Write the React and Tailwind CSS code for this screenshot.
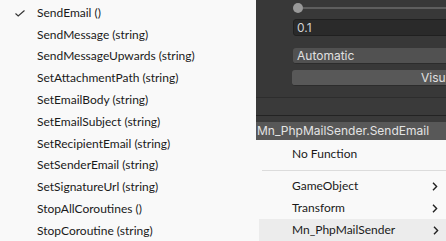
const methods = [
  "SendEmail ()",
  "SendMessage (string)",
  "SendMessageUpwards (string)",
  "SetAttachmentPath (string)",
  "SetEmailBody (string)",
  "SetEmailSubject (string)",
  "SetRecipientEmail (string)",
  "SetSenderEmail (string)",
  "SetSignatureUrl (string)",
  "StopAllCoroutines ()",
  "StopCoroutine (string)",
];

const winFont = { fontFamily: 'Lato, "Noto Sans", sans-serif' };
const unityFont = { fontFamily: 'Inter, "Noto Sans", sans-serif' };

function Check() {
  return (
    <svg width="10" height="7" viewBox="0 0 10 7" className="text-[#333]">
      <path d="M0.5 3.5 L3.2 6 L9.5 0.5" fill="none" stroke="currentColor" strokeWidth="1.1" />
    </svg>
  );
}

function Chevron() {
  return (
    <svg width="6" height="9" viewBox="0 0 6 9" className="text-[#222]">
      <path d="M1 0.8 L4.6 4.5 L1 8.2" fill="none" stroke="currentColor" strokeWidth="1.4" />
    </svg>
  );
}

function MenuRow({ label, sub }) {
  return (
    <div className="h-[22px] flex items-center pl-[36px] pr-[8px] text-[12px] text-[#1a1a1a]">
      <span className="flex-1">{label}</span>
      {sub && <Chevron />}
    </div>
  );
}

export default function App() {
  return (
    <div className="flex w-[446px] h-[241px] overflow-hidden bg-[#f9f9f9]" style={winFont}>
      <div className="w-[256px] shrink-0 bg-[#f9f9f9] pt-[2px]">
        {methods.map((m, i) => (
          <div key={m} className="h-[21.8px] flex items-center text-[12px] text-[#1a1a1a]">
            <div className="w-[37px] flex justify-center pl-[2px] pt-[1px]">{i === 0 && <Check />}</div>
            <span>{m}</span>
          </div>
        ))}
      </div>

      <div className="flex-1 min-w-0 flex flex-col overflow-hidden">
        <div className="h-[116px] bg-[#383838] flex flex-col pl-[37px] text-[12px]" style={unityFont}>
          <div className="h-[16px] flex items-center">
            <div className="w-[10px] h-[10px] rounded-full bg-[#999999] shrink-0" />
            <div className="flex-1 h-[2px] bg-[#5e5e5e]" />
          </div>
          <div className="mt-[3px] h-[17px] w-[200px] bg-[#2a2a2a] border border-[#202020] rounded-[3px] flex items-center pl-[3px] text-[#d2d2d2]">
            0.1
          </div>
          <div className="mt-[12px] h-[16px] w-[200px] bg-[#515151] border-b border-[#2c2c2c] rounded-[3px] flex items-center pl-[4px] text-[#e0e0e0]">
            Automatic
          </div>
          <div className="mt-[6px] -ml-px h-[16px] w-[200px] bg-[#585858] border-b border-[#2c2c2c] rounded-[3px] flex items-center pl-[129px] text-[#e0e0e0] whitespace-nowrap">
            Visu
          </div>
          <div className="mt-[11px] -ml-[37px] flex-1 bg-[#3a3a3a] border-t border-[#2d2d2d]" />
        </div>
        <div className="h-px bg-[#232323]" />
        <div className="h-[6px] bg-[#3a3a3a]" />
        <div
          className="h-[18px] bg-[#585858] flex items-center pl-[1px] text-[12px] text-[#e4e4e4] whitespace-nowrap"
          style={unityFont}
        >
          Mn_PhpMailSender.SendEmail
        </div>

        <div className="flex-1 bg-[#f9f9f9] pt-[3px]">
          <MenuRow label="No Function" />
          <div className="h-[10px] flex items-center pl-[6px]">
            <div className="h-px flex-1 bg-[#dcdcdc]" />
          </div>
          <MenuRow label="GameObject" sub />
          <MenuRow label="Transform" sub />
          <div className="ml-[3px] bg-[#ececec] -mr-px">
            <div className="-ml-[3px]">
              <MenuRow label="Mn_PhpMailSender" sub />
            </div>
          </div>
        </div>
      </div>
    </div>
  );
}
